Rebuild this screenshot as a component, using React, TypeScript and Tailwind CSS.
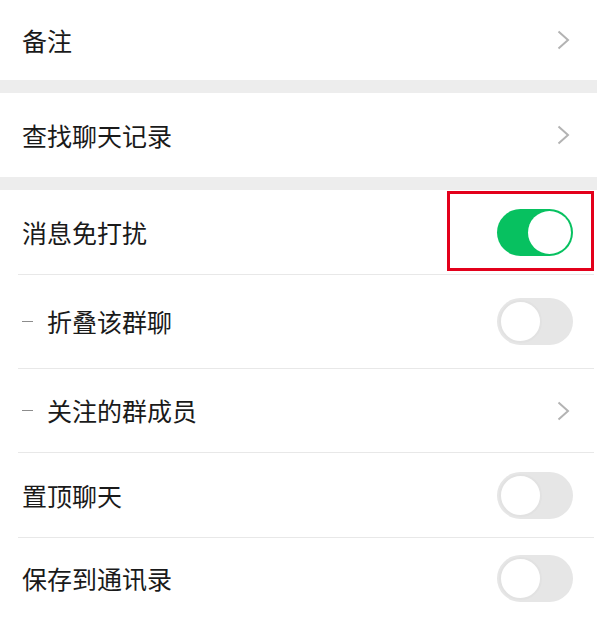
import React from "react";

type RowProps = {
  label: string;
  dash?: boolean;
  height: string;
  right: React.ReactNode;
  children?: React.ReactNode;
};

function Chevron() {
  return (
    <svg width="13" height="20" viewBox="0 0 13 20" fill="none">
      <polyline points="1.5,1.5 11,10 1.5,18.5" stroke="#b3b3b3" strokeWidth="2" strokeLinejoin="miter" />
    </svg>
  );
}

function Switch({ on }: { on: boolean }) {
  return on ? (
    <div className="flex h-[47px] w-[76px] items-center justify-end rounded-full bg-[#07c160] p-[2px]">
      <div className="h-[43px] w-[43px] rounded-full bg-white" />
    </div>
  ) : (
    <div className="flex h-[47px] w-[76px] items-center justify-start rounded-full bg-[#e6e6e6] p-[2px]">
      <div className="h-[43px] w-[43px] rounded-full border-[2px] border-[#e2e2e2] bg-white" />
    </div>
  );
}

function Row({ label, dash, height, right, children }: RowProps) {
  return (
    <div className={`relative flex items-center justify-between pl-[22px] ${height}`}>
      <div className="flex items-center text-[25px] leading-none text-[#1a1a1a]">
        {dash && <span className="mr-[14px] h-[1.5px] w-[11px] bg-[#8c8c8c]" />}
        <span>{label}</span>
      </div>
      {right}
      {children}
    </div>
  );
}

const Divider = () => <div className="ml-[18px] mr-[3px] h-px bg-[#e8e8e8]" />;
const Band = () => <div className="h-[13px] bg-[#ededed]" />;

export default function App() {
  return (
    <div
      className="h-[626px] w-[600px] bg-white"
      style={{ fontFamily: '"Noto Sans CJK SC", "Noto Sans", sans-serif' }}
    >
      <div className="w-[597px]">
        <Row label="备注" height="h-[80px]" right={<div className="mr-[27px]"><Chevron /></div>} />
        <Band />
        <Row label="查找聊天记录" height="h-[84px]" right={<div className="mr-[27px]"><Chevron /></div>} />
        <Band />
        <Row label="消息免打扰" height="h-[84px]" right={<div className="mr-[24px]"><Switch on /></div>}>
          <div className="absolute right-[3px] top-[1px] h-[80px] w-[147px] border-[3px] border-[#e3001b]" />
        </Row>
        <Divider />
        <Row label="折叠该群聊" dash height="h-[93px]" right={<div className="mr-[24px]"><Switch on={false} /></div>} />
        <Divider />
        <Row label="关注的群成员" dash height="h-[83px]" right={<div className="mr-[27px]"><Chevron /></div>} />
        <Divider />
        <Row label="置顶聊天" height="h-[84px]" right={<div className="mr-[24px]"><Switch on={false} /></div>} />
        <Divider />
        <Row label="保存到通讯录" height="h-[80px]" right={<div className="mr-[24px]"><Switch on={false} /></div>} />
      </div>
    </div>
  );
}
